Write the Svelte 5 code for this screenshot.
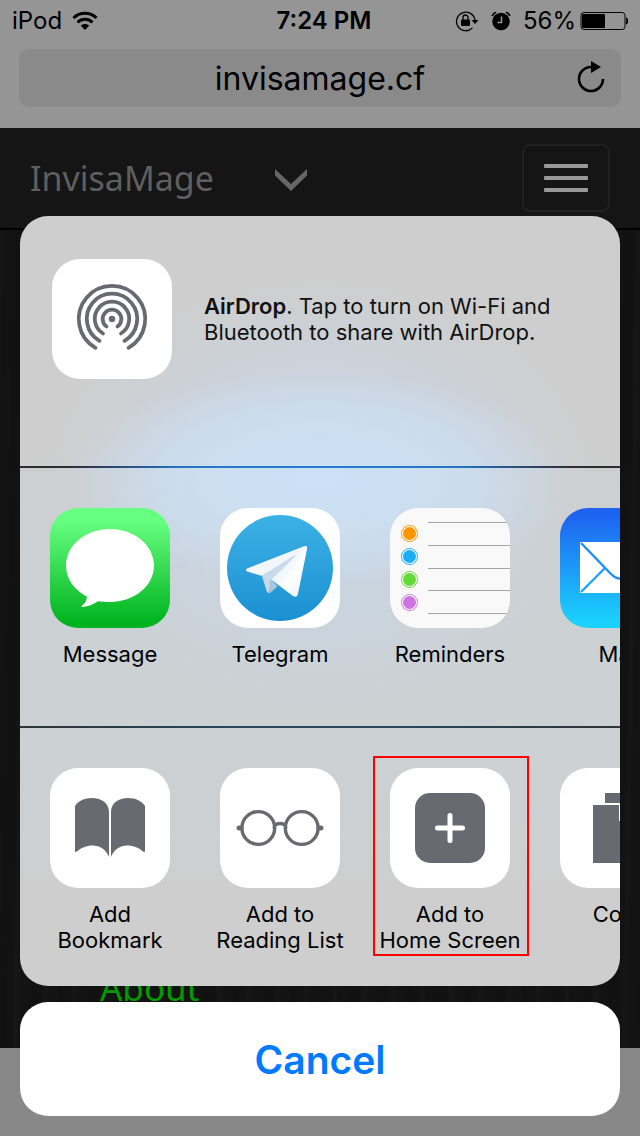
<script>
  const apps = [
    { id: 'message', label: 'Message' },
    { id: 'telegram', label: 'Telegram' },
    { id: 'reminders', label: 'Reminders' },
    { id: 'mail', label: 'Mail' }
  ];
  const actions = [
    { id: 'bookmark', label: 'Add\nBookmark' },
    { id: 'reading', label: 'Add to\nReading List' },
    { id: 'home', label: 'Add to\nHome Screen', marked: true },
    { id: 'copy', label: 'Copy' }
  ];
  const dots = [
    { y: 25, color: '#ff9500' },
    { y: 48, color: '#1badf8' },
    { y: 71, color: '#63da38' },
    { y: 94, color: '#cc73e1' }
  ];
  const rules = [14, 37, 60, 82, 105];
</script>

{#snippet icon(id)}
  <svg class="tile" viewBox="0 0 120 120" aria-hidden="true">
    {#if id === 'message'}
      <defs>
        <linearGradient id="g-message" x1="0" y1="0" x2="0" y2="1">
          <stop offset="0.1" stop-color="#67ff81" />
          <stop offset="0.95" stop-color="#01b41f" />
        </linearGradient>
      </defs>
      <rect width="120" height="120" fill="url(#g-message)" />
      <path fill="#fff" d="M60 21c24.300 0 44 16.300 44 36.500S84.300 94 60 94c-4.500 0-8.500-.4-12-.8C43 96.500 37 99 31.800 99c-1 0-.8-.8 0-1.300 3-1.800 4.700-5.500 5.200-9C24 82 16 70.500 16 57.500 16 37.300 35.700 21 60 21z" />
    {:else if id === 'telegram'}
      <defs>
        <linearGradient id="g-telegram" x1="0" y1="0" x2="0" y2="1">
          <stop offset="0" stop-color="#3cb1e5" />
          <stop offset="1" stop-color="#1b90d2" />
        </linearGradient>
        <linearGradient id="g-wing" x1="0" y1="0" x2="1" y2="1">
          <stop offset="0.3" stop-color="#e8f1f8" />
          <stop offset="0.6" stop-color="#ffffff" />
          <stop offset="1" stop-color="#e4eff7" />
        </linearGradient>
      </defs>
      <rect width="120" height="120" fill="#fff" />
      <circle cx="60" cy="60" r="53" fill="url(#g-telegram)" />
      <path fill="#f3f7fb" d="M27 60.500L84 38.200c2-.8 3.400.2 3 2.400L75 48 42 68 27.500 63.500c-2-.7-2-2.200-.5-3z" />
      <path fill="#c8daea" d="M42 68l31-20c1.800-1 2.600-.3 1.200 1L51 71.500 49 85c-1.300 0-2-.7-2.400-2z" />
      <path fill="#a9c6dd" d="M51 71.500L49 85c1 0 1.800-.6 2.600-1.300l6-5.500z" />
      <path fill="url(#g-wing)" d="M51 71.500L75 48l9-9.500c2-.6 3.200.2 3 2.500L78 86c-.6 3-2.800 3.300-5 1.900z" />
    {:else if id === 'reminders'}
      <rect width="120" height="120" fill="#f9f9f9" />
      {#each rules as y}
        <rect x="38" {y} width="82" height="1" fill="#a5a5a5" />
      {/each}
      {#each dots as dot}
        <circle cx="19.500" cy={dot.y + 0.5} r="8" fill="#fff" stroke={dot.color} />
        <circle cx="19.500" cy={dot.y + 0.5} r="6.500" fill={dot.color} />
      {/each}
    {:else if id === 'mail'}
      <defs>
        <linearGradient id="g-mail" x1="0" y1="0" x2="0" y2="1">
          <stop offset="0.05" stop-color="#1e62f0" />
          <stop offset="0.95" stop-color="#1bd2fd" />
        </linearGradient>
      </defs>
      <rect width="120" height="120" fill="url(#g-mail)" />
      <rect x="20" y="34" width="80" height="51" fill="#fff" />
      <g fill="none" stroke-width="2.400">
        <path stroke="#1d8ff7" d="M21 35l30 31q9 9 18 0l30-31" />
        <path stroke="#1ca4f9" d="M21 84l24-24M99 84L75 60" />
      </g>
    {:else if id === 'bookmark'}
      <rect width="120" height="120" fill="#fff" />
      <path fill="#696971" d="M25 38c3-4.500 9-8 17-8 10 0 17 5.500 17 14v45c-3-7.500-9-11.500-16-11.500S31 80 27 83.500c-1 .7-2 .6-2-.5zM95 38c-3-4.500-9-8-17-8-10 0-17 5.500-17 14v45c3-7.500 9-11.500 16-11.500S89 80 93 83.500c1 .7 2 .6 2-.5z" />
    {:else if id === 'reading'}
      <rect width="120" height="120" fill="#fff" />
      <g fill="none" stroke="#696971">
        <circle cx="38.300" cy="60" r="16.400" stroke-width="3.400" />
        <circle cx="81.700" cy="60" r="16.400" stroke-width="3.400" />
        <path stroke-width="3.400" d="M54 60c0-6 12-6 12 0" />
        <path stroke-width="5" stroke-linecap="round" d="M19 60h2M99 60h2" />
      </g>
    {:else if id === 'home'}
      <rect width="120" height="120" fill="#fff" />
      <rect x="25" y="25" width="70" height="70" rx="15" fill="#696971" />
      <path stroke="#fff" stroke-width="5" stroke-linecap="round" d="M60 47.500v25M47.500 60h25" />
    {:else if id === 'copy'}
      <rect width="120" height="120" fill="#fff" />
      <path fill="#696971" d="M45 25h42v58H67V53L59 35H45z" />
      <path fill="#fff" d="M31 35h28l18 18v44H31z" />
      <path fill="#696971" d="M33 37h26v16h16v42H33z" />
    {/if}
  </svg>
{/snippet}

<div class="screen">
  <header class="chrome">
    <div class="status">
      <div class="carrier">
        <span>iPod</span>
        <svg width="26" height="20" viewBox="0 0 26 20" aria-label="Wi-Fi">
          <g fill="none" stroke="#000" stroke-width="3">
            <path d="M1.500 7C8 .8 18 .8 24.500 7" />
            <path d="M5.500 11.300c4.300-4 10.700-4 15 0" />
          </g>
          <path d="M13 19l-4.300-4.400c2.500-2.200 6.100-2.200 8.600 0z" />
        </svg>
      </div>
      <strong>7:24 PM</strong>
      <div class="indicators">
        <svg width="24" height="22" viewBox="0 0 24 22" aria-label="Rotation lock">
          <path fill="none" stroke="#000" stroke-width="1.300" d="M17.500 17.900A9.300 9.300 0 1 1 20 10" />
          <path d="M16.500 10h7L20 14z" />
          <rect x="6" y="9.500" width="9" height="6.500" rx="1" />
          <path fill="none" stroke="#000" stroke-width="1.300" d="M8 10V7.500a2.500 2.500 0 0 1 5 0V10" />
        </svg>
        <svg width="20" height="20" viewBox="0 0 20 20" aria-label="Alarm">
          <circle cx="10" cy="10.500" r="8.700" />
          <path fill="none" stroke="#000" stroke-width="1.600" d="M1 5c.8-2 2.200-3.300 4.200-3.800M19 5c-.8-2-2.200-3.300-4.200-3.800" />
          <path fill="none" stroke="#999" stroke-width="1.500" d="M10.500 5.500V11.500H6.500" />
        </svg>
        <span>56%</span>
        <svg width="48" height="20" viewBox="0 0 48 20" aria-label="Battery">
          <rect x="1" y="1.500" width="44" height="17" rx="3" fill="none" stroke="#000" />
          <rect x="2" y="3" width="23" height="14" rx="1" />
          <path d="M46 6.500c3 .5 3 6.500 0 7z" />
        </svg>
      </div>
    </div>
    <div class="address">
      <span>invisamage.cf</span>
      <button class="reload" aria-label="Reload">
        <svg width="30" height="34" viewBox="0 0 30 34">
          <path fill="none" stroke="#000" stroke-width="2.600" d="M28 18A12 12 0 1 1 16 6h2" />
          <path d="M16 0l10 6-10 6z" />
        </svg>
      </button>
    </div>
  </header>

  <main class="site">
    <nav>
      <a class="brand" href="#top">InvisaMage</a>
      <button class="more" aria-label="Show more">
        <svg width="34" height="28" viewBox="0 0 34 28">
          <path fill="#666" d="M1 5l16 15L33 5v6.500L17 27 1 11.500z" />
        </svg>
      </button>
      <button class="menu" aria-label="Menu"><i></i><i></i><i></i></button>
    </nav>
    <h2>About</h2>
  </main>
  <footer class="toolbar"></footer>

  <div class="overlay" role="dialog" aria-label="Share">
    <div class="sheet">
      <section class="airdrop">
        <svg class="tile" viewBox="0 0 120 120" aria-hidden="true">
          <rect width="120" height="120" fill="#fff" />
          <circle cx="60" cy="60" r="3.200" fill="#696971" />
          <g fill="none" stroke="#696971" stroke-width="3.800" stroke-linecap="round">
            <path d="M54.500 67.500a9.300 9.300 0 1 1 11 0" />
            <path d="M51 74.500a17.200 17.200 0 1 1 18 0" />
            <path d="M47.500 81.800a25.200 25.200 0 1 1 25 0" />
            <path d="M43.500 88.800a33.200 33.200 0 1 1 33 0" />
          </g>
        </svg>
        <p><b>AirDrop</b>. Tap to turn on Wi-Fi and Bluetooth to share with AirDrop.</p>
      </section>
      <section class="row upper">
        {#each apps as app}
          <button class="item">{@render icon(app.id)}<span>{app.label}</span></button>
        {/each}
      </section>
      <section class="row lower">
        {#each actions as action}
          <button class="item" class:marked={action.marked}>{@render icon(action.id)}<span>{action.label}</span></button>
        {/each}
      </section>
    </div>
    <button class="cancel">Cancel</button>
  </div>
</div>

<style>
  :global(body) {
    margin: 0;
  }
  .screen {
    position: relative;
    display: flex;
    flex-direction: column;
    min-height: 100vh;
    overflow: hidden;
    color: #000;
    font-family: Inter, 'Liberation Sans', sans-serif;
  }
  button {
    padding: 0;
    border: 0;
    background: none;
    color: inherit;
    font: inherit;
  }
  svg {
    display: block;
  }
  .chrome {
    box-sizing: border-box;
    height: 128px;
    padding: 0 12px;
    background: #959595;
  }
  .status {
    display: grid;
    grid-template-columns: 1fr auto 1fr;
    align-items: center;
    height: 41px;
    margin-bottom: 8px;
    font-size: 24px;
  }
  .status strong {
    padding-left: 8px;
    font-weight: 600;
  }
  .carrier,
  .indicators {
    display: flex;
    align-items: center;
    gap: 12px;
  }
  .carrier {
    gap: 10px;
  }
  .indicators {
    justify-content: flex-end;
  }
  .indicators svg:last-child {
    margin-left: -8px;
  }
  .address {
    display: grid;
    grid-template-columns: 30px 1fr 30px;
    align-items: center;
    height: 58px;
    margin: 0 7px;
    padding: 0 16px;
    border-radius: 10px;
    background: #8a8a8a;
    font-size: 32px;
    text-align: center;
  }
  .address span {
    grid-column: 2;
  }
  .site {
    flex: 1;
    display: flex;
    flex-direction: column;
    justify-content: space-between;
    background:
      repeating-linear-gradient(91deg, #ffffff03 0 3px, #0000 7px 13px, #00000018 17px 21px, #0000 29px),
      #131313;
  }
  nav {
    box-sizing: border-box;
    display: flex;
    align-items: center;
    height: 102px;
    padding: 0 30px;
    border-bottom: 2px solid #000;
    background: #151515;
  }
  .brand {
    color: #5f5f5f;
    font-family: 'Noto Sans', sans-serif;
    font-size: 34px;
    text-decoration: none;
  }
  .more {
    margin-left: 60px;
  }
  .menu {
    display: flex;
    flex-direction: column;
    align-items: center;
    justify-content: center;
    gap: 8px;
    width: 88px;
    height: 68px;
    margin-left: auto;
    border: 2px solid #202020;
    border-radius: 8px;
  }
  .menu i {
    width: 44px;
    height: 4px;
    border-radius: 1px;
    background: #999;
  }
  h2 {
    margin: 0;
    padding: 0 100px 36px;
    color: #009a00;
    font: 400 35px/48px 'Noto Sans', sans-serif;
  }
  .toolbar {
    height: 88px;
    background: #888;
  }
  .overlay {
    position: absolute;
    right: 20px;
    bottom: 20px;
    left: 20px;
    display: flex;
    flex-direction: column;
    gap: 16px;
  }
  .sheet {
    overflow: hidden;
    border-radius: 28px;
    background:
      radial-gradient(ellipse 42% 14% at 50% 34%, #cce1f5 0%, #cce1f5e0 35%, #cce1f580 68%, #cce1f500 100%),
      radial-gradient(ellipse 46% 28% at 50% 36%, #c9d6e4 0%, #c9d6e4a0 55%, #c9d6e400 100%),
      linear-gradient(#cecece 30%, #ccd1d4 50%, #ccd1d4 70%, #cecece 88%);
  }
  .airdrop {
    display: flex;
    align-items: flex-start;
    gap: 32px;
    box-sizing: border-box;
    height: 250px;
    padding: 43px 32px 0;
  }
  .airdrop p {
    margin: 0;
    padding-top: 34px;
    max-width: 370px;
    color: #111;
    font-size: 22px;
    line-height: 26px;
  }
  .airdrop b {
    font-weight: 600;
  }
  .tile {
    flex: none;
    width: 120px;
    height: 120px;
    border-radius: 28px;
  }
  .row {
    display: flex;
    align-items: flex-start;
    gap: 20px;
    box-sizing: border-box;
    height: 260px;
    padding: 40px 0 0 15px;
    border-top: 2px solid;
    overflow: hidden;
  }
  .upper {
    border-image: linear-gradient(90deg, #302c34 8%, #2575c4 27%, #2a7bce 50%, #2575c4 73%, #302c34 92%) 1;
  }
  .lower {
    border-image: linear-gradient(90deg, #2e3338, #26485c 35%, #26485c 65%, #2e3338) 1;
  }
  .item {
    position: relative;
    flex: none;
    display: flex;
    flex-direction: column;
    align-items: center;
    gap: 13px;
    width: 150px;
    font-size: 22px;
    line-height: 26px;
    white-space: pre-line;
  }
  .marked::after {
    content: '';
    position: absolute;
    inset: -12px -4px -3px -2px;
    border: 2px solid #f00;
  }
  .cancel {
    height: 114px;
    border-radius: 28px;
    background: #fff;
    color: #007aff;
    font-size: 39px;
    font-weight: 600;
  }
</style>
